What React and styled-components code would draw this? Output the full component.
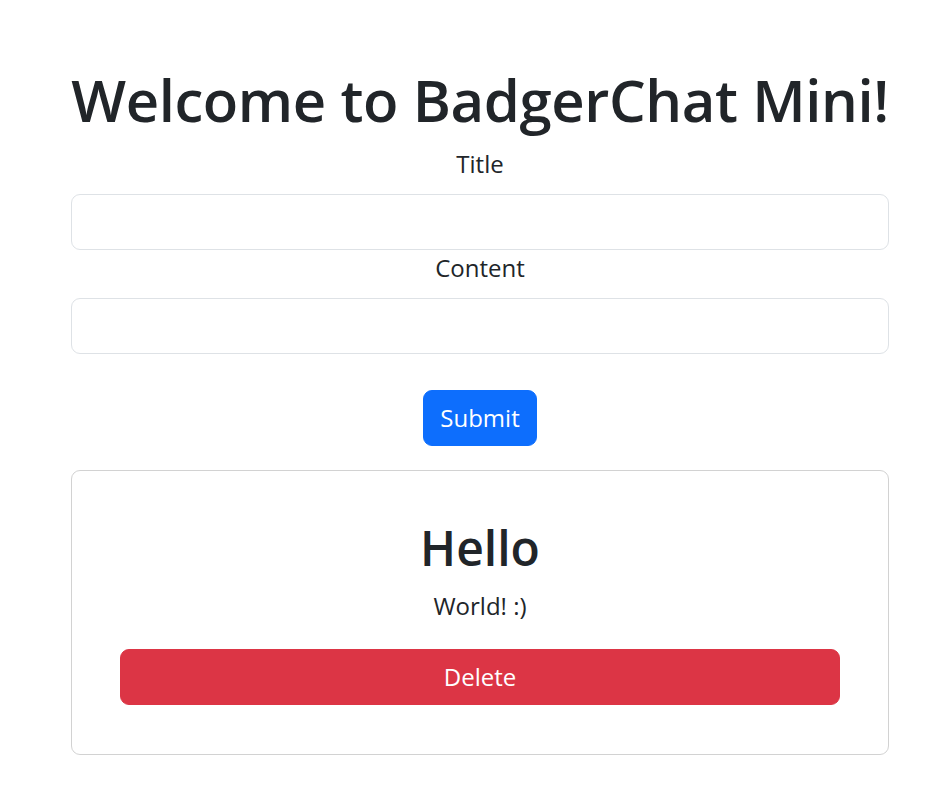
// BadgerChat Mini 메인 화면
import React from 'react'
import styled, { createGlobalStyle } from 'styled-components';

const GlobalStyle = createGlobalStyle`
    body {
        margin: 0;
        background: #fff;
        color: #212529;
        font-family: "Open Sans", "Noto Sans", sans-serif;
        font-size: 24px;
        line-height: 1.5;
    }
    * { box-sizing: border-box; }
`

function App() {
return (
    <>
        <GlobalStyle/>
        <Page>
            <Title>Welcome to BadgerChat Mini!</Title>

            <Field>
                <Label htmlFor='title'>Title</Label>
                <Input id='title'/>
            </Field>
            <Field>
                <Label htmlFor='content'>Content</Label>
                <Input id='content'/>
            </Field>

            <SubmitRow>
                <Button $variant='primary'>Submit</Button>
            </SubmitRow>

            {/* 메시지 카드 */}
            <Card>
                <CardTitle>Hello</CardTitle>
                <CardText>World! :)</CardText>
                <Button $variant='danger' $block>Delete</Button>
            </Card>
        </Page>
    </>
)
}

export default App



const Page = styled.div`
    width: 818px;
    margin-left: 71px;
    padding-top: 65px;
    text-align: center;
`

const Title = styled.h1`
    margin: 0 0 10px;
    font-size: 58px;
    font-weight: 600;
    line-height: 1.22;
    white-space: nowrap;
    letter-spacing: -0.4px;
`

const Field = styled.div`
    display: flex;
    flex-direction: column;
`

const Label = styled.label`
    display: block;
    margin-bottom: 12px;
`

const Input = styled.input`
    display: block;
    width: 100%;
    height: 56px;
    padding: 9px 18px;
    font: inherit;
    color: #212529;
    border: 1px solid #dee2e6;
    border-radius: 9px;
    background: #fff;
    outline: none;
`

const SubmitRow = styled.div`
    padding-top: 36px;
    margin-bottom: 24px;
`

const Button = styled.button`
    display: ${p => p.$block ? 'block' : 'inline-block'};
    width: ${p => p.$block ? '100%' : 'auto'};
    height: 56px;
    padding: 9px 16px;
    font: inherit;
    line-height: 1.5;
    color: #fff;
    border: 1px solid ${p => p.$variant === 'danger' ? '#dc3545' : '#0d6efd'};
    background: ${p => p.$variant === 'danger' ? '#dc3545' : '#0d6efd'};
    border-radius: 9px;
    cursor: pointer;
`

const Card = styled.div`
    border: 1px solid #d2d2d2;
    border-radius: 9px;
    padding: 48px 48px 49px;
`

const CardTitle = styled.h2`
    margin: 0 0 12px;
    font-size: 48px;
    font-weight: 600;
    line-height: 1.2;
`

const CardText = styled.p`
    margin: 0 0 25px;
`
